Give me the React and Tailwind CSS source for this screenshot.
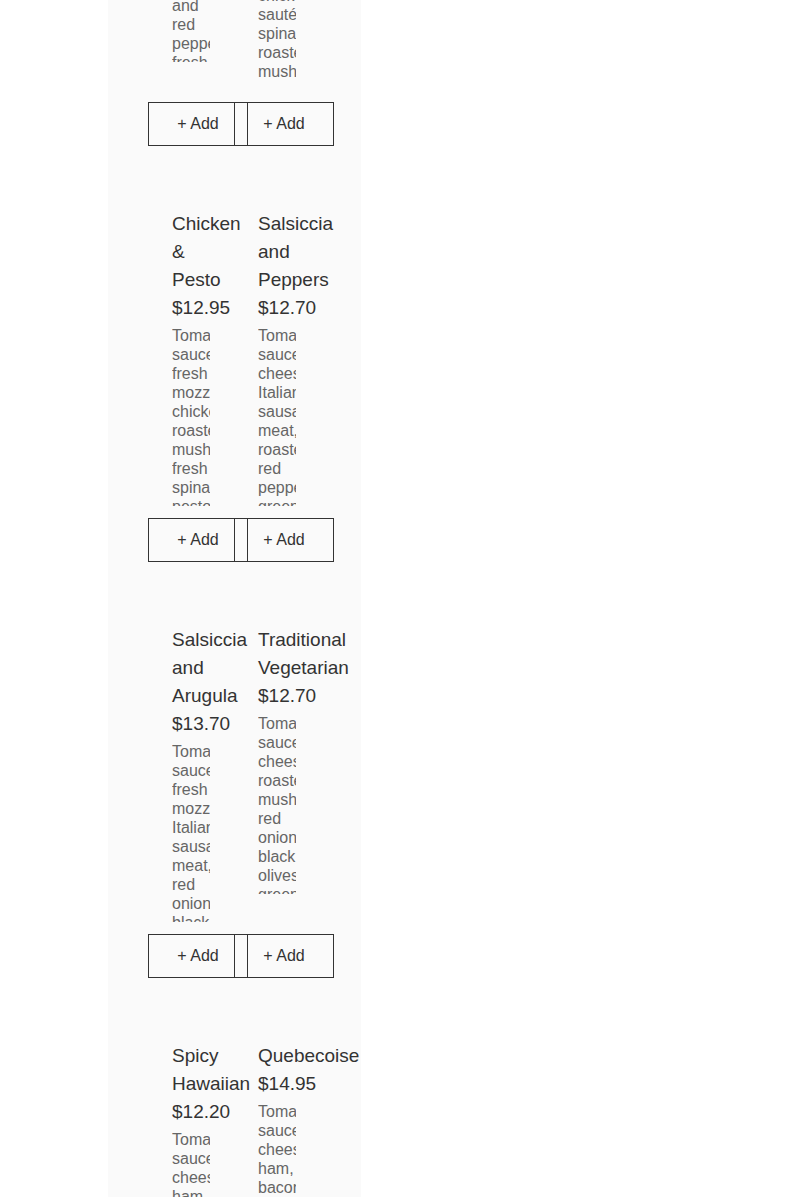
import React from 'react';

const pizzas = [
  {
    name: 'Roasted Veggie',
    price: '$11.95',
    desc: 'Tomato sauce, cheese, grilled onions, zucchini and red peppers, fresh basil',
  },
  {
    name: 'Chicken & Spinach',
    price: '$13.20',
    desc: 'Tomato sauce, cheese, grilled chicken, sautéed spinach, roasted mushrooms',
  },
  {
    name: 'Chicken & Pesto',
    price: '$12.95',
    desc: 'Tomato sauce, fresh mozzarella, chicken, roasted mushrooms, fresh spinach, pesto sauce',
  },
  {
    name: 'Salsiccia and Peppers',
    price: '$12.70',
    desc: 'Tomato sauce, cheese, Italian sausage meat, roasted red peppers, green onions',
  },
  {
    name: 'Salsiccia and Arugula',
    price: '$13.70',
    desc: 'Tomato sauce, fresh mozzarella, Italian sausage meat, red onions, black olives, arugula',
  },
  {
    name: 'Traditional Vegetarian',
    price: '$12.70',
    desc: 'Tomato sauce, cheese, roasted mushrooms, red onions, black olives, green peppers',
  },
  {
    name: 'Spicy Hawaiian',
    price: '$12.20',
    desc: 'Tomato sauce, cheese, ham, pineapple, jalapeños, hot peppers',
  },
  {
    name: 'Quebecoise',
    price: '$14.95',
    desc: 'Tomato sauce, cheese, ham, bacon, mushrooms, green peppers',
  },
];

const PizzaCard = ({ pizza }) => (
  <div className="flex flex-col min-w-0 py-6">
    <div className="px-6">
      <h3 className="text-[19px] leading-[28px] font-normal text-[#333]">{pizza.name}</h3>
      <p className="text-[19px] leading-[28px] text-[#333]">{pizza.price}</p>
      <p className="mt-1 h-[180px] overflow-hidden text-[16px] leading-[19px] text-[#666]">
        {pizza.desc}
      </p>
    </div>
    <div className="mt-auto pt-3">
      <button className="block w-[100px] h-[44px] shrink-0 border border-[#333] bg-transparent text-[16px] text-[#333]">
        + Add
      </button>
    </div>
  </div>
);

export default function App() {
  return (
    <div className="min-h-screen bg-white font-['Liberation_Sans',Arial,sans-serif] overflow-hidden">
      <div className="ml-[108px] w-[253px] min-h-screen bg-[#fafafa] px-10 flex flex-col">
        {/* list is scrolled: first row sits above the top edge */}
        <div className="mt-[-230px] grid grid-cols-[86px_86px] gap-y-4">
          {pizzas.map((p) => (
            <PizzaCard key={p.name} pizza={p} />
          ))}
        </div>
      </div>
    </div>
  );
}
